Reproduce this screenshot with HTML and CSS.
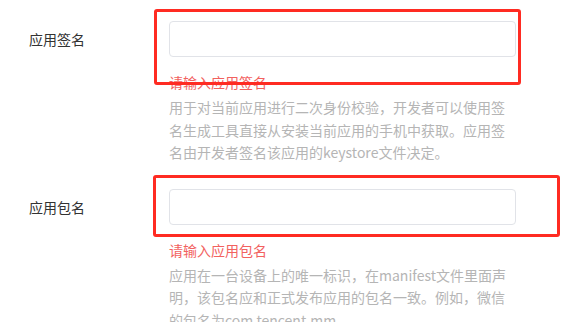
FILE: index.html
```html
<!DOCTYPE html>
<html lang="zh-CN">
<head>
<meta charset="utf-8">
<title>应用信息</title>
<link rel="stylesheet" href="styles.css">
</head>
<body>
<div class="form">
  <div class="item">
    <div class="label">应用签名</div>
    <div class="field">
      <input class="input" type="text">
      <div class="error">请输入应用签名</div>
      <div class="help">用于对当前应用进行二次身份校验，开发者可以使用签名生成工具直接从安装当前应用的手机中获取。应用签名由开发者签名该应用的keystore文件决定。</div>
    </div>
  </div>
  <div class="item">
    <div class="label">应用包名</div>
    <div class="field">
      <input class="input" type="text">
      <div class="error">请输入应用包名</div>
      <div class="help">应用在一台设备上的唯一标识，在manifest文件里面声明，该包名应和正式发布应用的包名一致。例如，微信的包名为com.tencent.mm</div>
    </div>
  </div>
  <div class="mark mark-one"></div>
  <div class="mark mark-two"></div>
</div>
</body>
</html>
```
FILE: styles.css
```css
html, body {
  margin: 0;
  padding: 0;
  background: #ffffff;
  overflow: hidden;
}
body {
  font-family: "Noto Sans CJK SC", "Microsoft YaHei", sans-serif;
  font-size: 14px;
}
.form {
  position: relative;
  padding-top: 21px;
}
.item {
  display: flex;
  align-items: flex-start;
  margin-bottom: 25px;
}
.label {
  width: 140px;
  padding-left: 29px;
  height: 36px;
  line-height: 36px;
  color: #333333;
  font-size: 14px;
}
.field {
  width: 347px;
  display: flex;
  flex-direction: column;
}
.input {
  box-sizing: border-box;
  width: 347px;
  height: 36px;
  margin: 0;
  border: 1px solid #e1e3e8;
  border-radius: 4px;
  background: #fff;
  outline: none;
}
.error {
  margin-top: 14px;
  line-height: 22px;
  color: #f2625f;
}
.help {
  margin-top: 3px;
  line-height: 22.5px;
  color: #b5b5b5;
}
.mark {
  position: absolute;
  box-sizing: border-box;
  border: 3px solid #ff2b22;
  border-radius: 3px;
}
.mark-one {
  left: 154px;
  top: 9px;
  width: 367px;
  height: 76px;
}
.mark-two {
  left: 153px;
  top: 175px;
  width: 407px;
  height: 62px;
}
```
